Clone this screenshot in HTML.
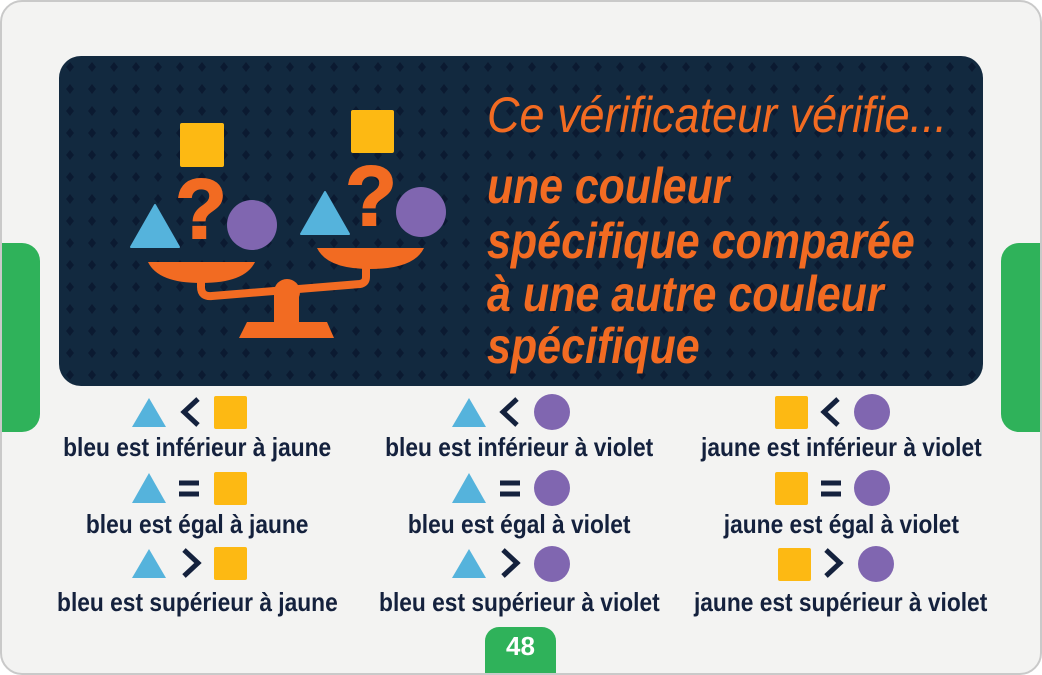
<!DOCTYPE html>
<html><head><meta charset="utf-8"><style>
html,body{margin:0;padding:0}
body{width:1042px;height:675px;position:relative;overflow:hidden;background:#fff;font-family:"Liberation Sans",sans-serif}
.card{position:absolute;left:0;top:0;width:1038px;height:671px;border:2px solid #c9c9c9;border-radius:22px;background:#f3f3f2;overflow:hidden}
.tab{position:absolute;background:#2fb25a;top:241px;height:189px;width:40px}
.panel{position:absolute;left:57px;top:54px;width:924px;height:330px;border-radius:22px;background-color:#12293f;overflow:hidden}
.h{position:absolute;left:485px;color:#f26b22;font-style:italic;font-size:50px;white-space:nowrap;transform-origin:0 0;line-height:1}
.t{position:absolute;width:400px;text-align:center;color:#14213d;font-size:26px;font-weight:bold;line-height:1}
.t span{display:inline-block;transform:scaleX(0.875)}
.pg{position:absolute;width:71px;height:50px;background:#2fb25a;border-radius:14px 14px 0 0;color:#fff;font-weight:bold;font-size:26px;text-align:center;line-height:38px}
</style></head><body>
<div class="card">
<div class="tab" style="left:-2px;border-radius:0 18px 18px 0"></div>
<div class="tab" style="left:999px;border-radius:18px 0 0 18px;width:45px"></div>
<div class="panel"><svg width="924" height="330"><defs><pattern id="d" width="22" height="22" patternUnits="userSpaceOnUse"><path d="M11 6 L15 11 L11 16 L7 11Z" fill="#0b1a31"/></pattern></defs><rect width="924" height="330" fill="url(#d)"/></svg></div>
<div class="h" style="top:88px;transform:scaleX(0.9)">Ce vérificateur vérifie...</div>
<div class="h" style="top:159px;font-weight:bold;transform:scaleX(0.855)">une couleur</div>
<div class="h" style="top:214px;font-weight:bold;transform:scaleX(0.86)">spécifique comparée</div>
<div class="h" style="top:267px;font-weight:bold;transform:scaleX(0.86)">à une autre couleur</div>
<div class="h" style="top:319px;font-weight:bold;transform:scaleX(0.86)">spécifique</div>
<svg width="1042" height="675" style="position:absolute;left:-2px;top:-2px">
<rect x="180" y="123" width="44" height="44" rx="2" fill="#fdb913"/>
<rect x="351" y="110" width="43" height="43" rx="2" fill="#fdb913"/>
<polygon points="155,205 179,247 131,247" fill="#55b3dc" stroke="#55b3dc" stroke-width="2" stroke-linejoin="round"/>
<polygon points="325,192 349,234 301,234" fill="#55b3dc" stroke="#55b3dc" stroke-width="2" stroke-linejoin="round"/>
<circle cx="252" cy="225" r="25" fill="#8066b0"/>
<circle cx="421" cy="212" r="25" fill="#8066b0"/>
<text x="201" y="238" font-family="Liberation Sans" font-weight="bold" font-size="84" fill="#f26b22" text-anchor="middle" stroke="#f26b22" stroke-width="2">?</text>
<text x="371" y="225" font-family="Liberation Sans" font-weight="bold" font-size="84" fill="#f26b22" text-anchor="middle" stroke="#f26b22" stroke-width="2">?</text>
<path d="M148 262 L255 262 Q245 283 201 283 Q158 283 148 262Z" fill="#f26b22"/>
<path d="M317 248 L424 248 Q414 269 370 269 Q327 269 317 248Z" fill="#f26b22"/>
<path d="M201 278 L201 287 Q201 297 212 296 L360 284 Q366 283 366 277 L366 265" fill="none" stroke="#f26b22" stroke-width="8"/>
<circle cx="287" cy="292" r="13" fill="#f26b22"/>
<rect x="274" y="292" width="25" height="32" fill="#f26b22"/>
<path d="M247 322 L327 322 L334 338 L239 338Z" fill="#f26b22"/>
<g fill="#55b3dc">
<polygon points="149,398 166,427 132,427"/><polygon points="149,473 166,503 132,503"/><polygon points="149,549 166,578 132,578"/>
<polygon points="469,398 486,427 452,427"/><polygon points="469,473 486,503 452,503"/><polygon points="469,549 486,578 452,578"/>
</g>
<g fill="#fdb913">
<rect x="214" y="396" width="33" height="33" rx="2"/><rect x="214" y="472" width="33" height="33" rx="2"/><rect x="214" y="547" width="33" height="33" rx="2"/>
<rect x="775" y="396" width="33" height="33" rx="2"/><rect x="775" y="472" width="33" height="33" rx="2"/><rect x="778" y="548" width="33" height="33" rx="2"/>
</g>
<g fill="#8066b0">
<circle cx="552" cy="412" r="18"/><circle cx="552" cy="488" r="18"/><circle cx="552" cy="564" r="18"/>
<circle cx="872" cy="412" r="18"/><circle cx="872" cy="488" r="18"/><circle cx="876" cy="564" r="18"/>
</g>
<g fill="none" stroke="#14213d" stroke-width="5">
<path d="M198 399 L184 412 L198 425"/><path d="M517 399 L503 412 L517 425"/><path d="M838 399 L824 412 L838 425"/>
<path d="M184 550 L198 563 L184 576"/><path d="M503 550 L517 563 L503 576"/><path d="M826 550 L840 563 L826 576"/>
<path d="M179 483 H199 M179 494 H199"/><path d="M500 483 H520 M500 494 H520"/><path d="M821 483 H841 M821 494 H841"/>
</g>
</svg>
<div class="t" style="left:-5px;top:432px"><span>bleu est inférieur à jaune</span></div>
<div class="t" style="left:-5px;top:509px"><span>bleu est égal à jaune</span></div>
<div class="t" style="left:-5px;top:587px"><span>bleu est supérieur à jaune</span></div>
<div class="t" style="left:317px;top:432px"><span>bleu est inférieur à violet</span></div>
<div class="t" style="left:317px;top:509px"><span>bleu est égal à violet</span></div>
<div class="t" style="left:317px;top:587px"><span>bleu est supérieur à violet</span></div>
<div class="t" style="left:639px;top:432px"><span>jaune est inférieur à violet</span></div>
<div class="t" style="left:639px;top:509px"><span>jaune est égal à violet</span></div>
<div class="t" style="left:639px;top:587px"><span>jaune est supérieur à violet</span></div>
<div class="pg" style="left:483px;top:625px">48</div>
</div>
</body></html>
